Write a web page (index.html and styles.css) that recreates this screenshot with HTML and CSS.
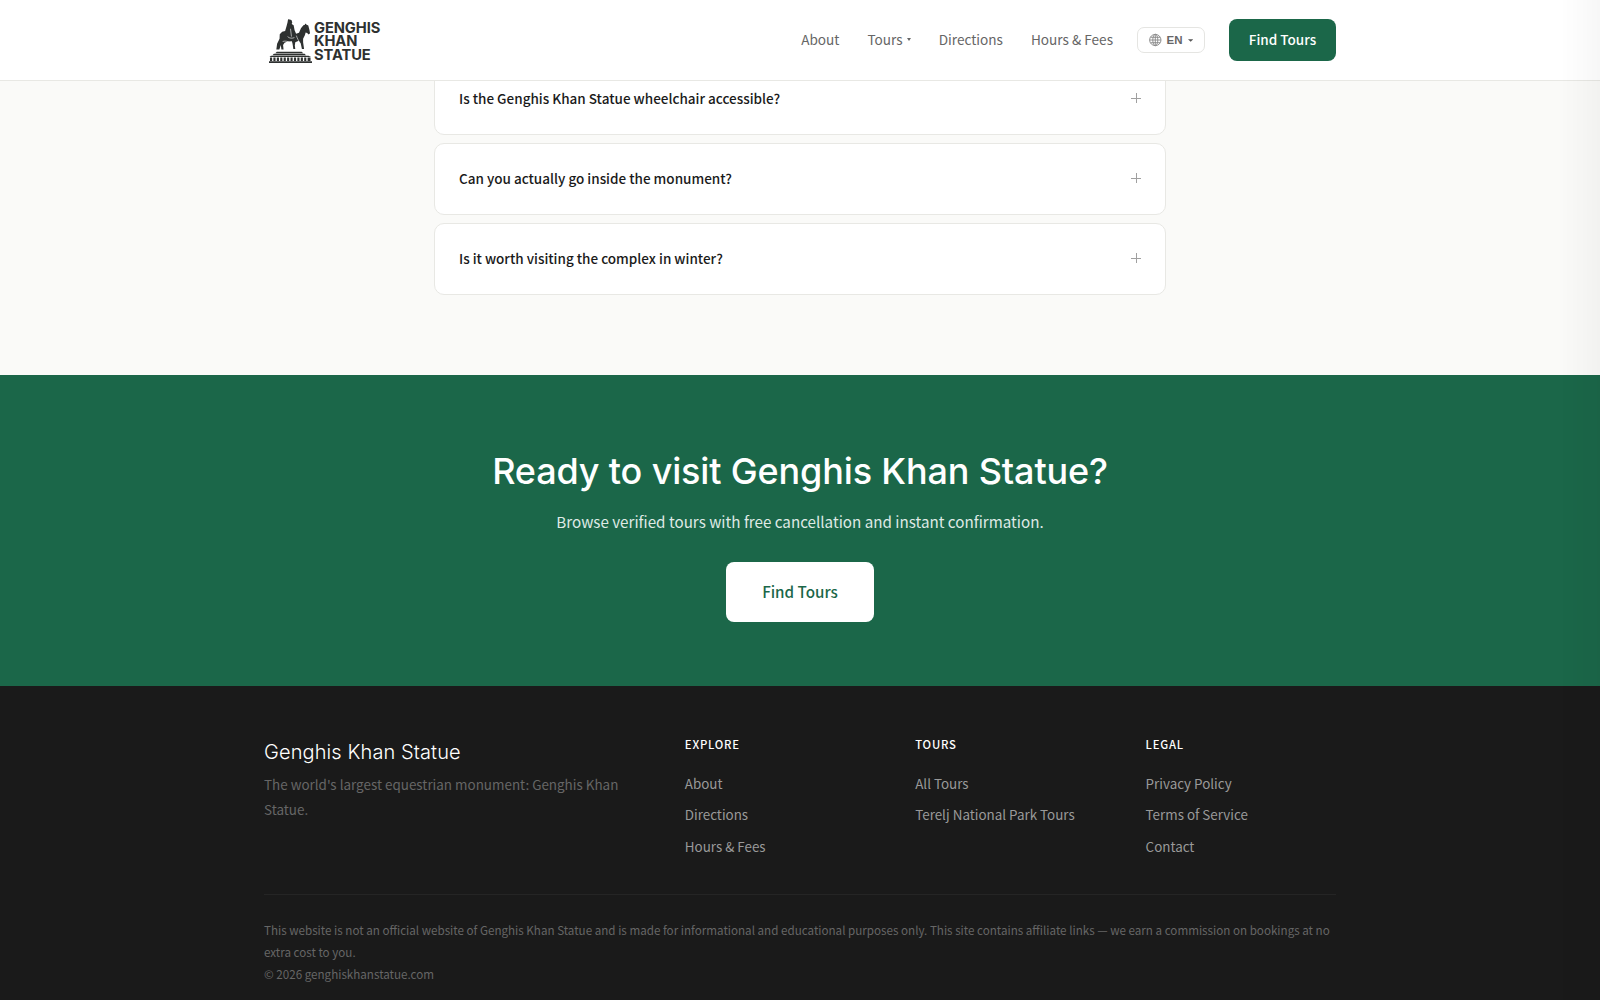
FILE: index.html
```html
<!DOCTYPE html>
<html lang="en">
<head>
<meta charset="utf-8">
<title>Genghis Khan Statue</title>
<link rel="stylesheet" href="styles.css">
</head>
<body>
<header class="site-header">
  <div class="container header-inner">
    <a class="logo" href="#">
      <svg class="logo-mark" width="43" height="45" viewBox="0 0 44 46" aria-hidden="true">
        <path fill="#2e3130" d="M21 1.500l2 .5.8 2.500-.6 1.500 2 1.500 1 5 1.500 3.500 3-1 2-4.500 2.500-3 1.500-.5.5-1.500 1 1.200 2 1 1.200 4.500.6 3.500-1.400 1.200-1.600-1.700-1.500-.5-.8 3-1.800 3.500v3.500l1 7h-2.200l-1.300-6-2-2.500-3.500 1.500-.5 3.500.5 3.500h-2l-.8-5.500-.7-2.500-4.500.3-3 1.200-1.500 2.500.5 4.500h-2.200l-.6-4.500-1.500 4.500H7.500l.8-6 2.500-5 .2-4.500 2.500-2.700 3-.8 1.500-5 1-4 .5-3z"/>
        <path fill="none" stroke="#fff" stroke-width=".6" d="M19 19c2 2 5 2 7 1M14 24c3-1 6 0 8 2M28 18c1 3 2 5 3 6M22 11l1 8"/>
        <path fill="#2e3130" d="M8 34.500h25.500l1.500 1.500H6.500zM5 36.500h31.500l1.300 1.500H3.500zM2 38.500h38.500l2.500 1.500H.5zM0 44.300h44V46H0z"/>
        <path fill="#2e3130" d="M1 40.500h2.200v3.500H1zM4.500 40.500h2.200v3.500H4.500zM8 40.500h2.200v3.500H8zM11.500 40.500h2.200v3.500h-2.200zM15 40.500h2.200v3.500H15zM18.500 40.500h2.200v3.500h-2.200zM22 40.500h2.200v3.500H22zM25.500 40.500h2.200v3.500h-2.200zM29 40.500h2.200v3.500H29zM32.500 40.500h2.200v3.500h-2.200zM36 40.500h2.200v3.500H36zM39.500 40.500h3v3.500h-3z"/>
      </svg>
      <span class="logo-text">GENGHIS<br>KHAN<br>STATUE</span>
    </a>
    <nav class="nav">
      <a href="#">About</a>
      <a href="#" class="nav-tours">Tours<svg class="mini-caret" width="4" height="3" viewBox="0 0 4 3" aria-hidden="true"><path fill="#666" d="M0 0h4L2 3z"/></svg></a>
      <a href="#">Directions</a>
      <a href="#">Hours &amp; Fees</a>
    </nav>
    <button class="lang">
      <svg class="globe" width="14" height="14" viewBox="0 0 14 14" fill="none" stroke="#888" stroke-width="1" aria-hidden="true">
        <circle cx="7" cy="7" r="6.300"/><ellipse cx="7" cy="7" rx="2.800" ry="6.300"/><path d="M.8 7h12.400M1.800 4h10.400M1.800 10h10.400M7 1v12"/>
      </svg>
      <span>EN</span>
      <svg class="lang-caret" width="6" height="3" viewBox="0 0 6 3" aria-hidden="true"><path fill="#555" d="M0 0h6L3 3z"/></svg>
    </button>
    <a class="btn-find" href="#">Find Tours</a>
  </div>
</header>
<main>
  <section class="faq">
    <div class="faq-list">
      <div class="faq-item"><span>Is the Genghis Khan Statue wheelchair accessible?</span><i class="plus"></i></div>
      <div class="faq-item"><span>Can you actually go inside the monument?</span><i class="plus"></i></div>
      <div class="faq-item"><span>Is it worth visiting the complex in winter?</span><i class="plus"></i></div>
    </div>
  </section>
  <section class="cta">
    <h2>Ready to visit Genghis Khan Statue?</h2>
    <p>Browse verified tours with free cancellation and instant confirmation.</p>
    <a class="cta-btn" href="#">Find Tours</a>
  </section>
</main>
<footer class="footer">
  <div class="container">
    <div class="footer-grid">
      <div>
        <div class="brand">Genghis Khan Statue</div>
        <p class="tagline">The world's largest equestrian monument: Genghis Khan Statue.</p>
      </div>
      <div class="col">
        <h4>EXPLORE</h4>
        <a href="#">About</a><a href="#">Directions</a><a href="#">Hours &amp; Fees</a>
      </div>
      <div class="col">
        <h4>TOURS</h4>
        <a href="#">All Tours</a><a href="#">Terelj National Park Tours</a>
      </div>
      <div class="col">
        <h4>LEGAL</h4>
        <a href="#">Privacy Policy</a><a href="#">Terms of Service</a><a href="#">Contact</a>
      </div>
    </div>
    <div class="legal">
      <p>This website is not an official website of Genghis Khan Statue and is made for informational and educational purposes only. This site contains affiliate links — we earn a commission on bookings at no extra cost to you.</p>
      <p>© 2026 genghiskhanstatue.com</p>
    </div>
  </div>
</footer>
<div class="edge-shade"></div>
</body>
</html>
```
FILE: styles.css
```css
* { box-sizing: border-box; }
html, body { margin: 0; padding: 0; height: 1000px; overflow: hidden; }
body {
  font-family: "Noto Sans CJK SC", "Noto Sans", sans-serif;
  background: #fafaf8;
  color: #1a1a1a;
}
a { text-decoration: none; color: inherit; }
.container { width: 1120px; margin: 0 auto; padding: 0 24px; }

.site-header {
  position: relative;
  z-index: 5;
  height: 81px;
  background: #fff;
  border-bottom: 1px solid #e8e8e4;
}
.header-inner { display: flex; align-items: center; height: 80px; }
.logo { display: flex; align-items: center; gap: 2px; margin-left: 5px; margin-right: auto; }
.logo-mark { display: block; }
.logo-text {
  padding-top: 4px;
  font-family: Inter, "Liberation Sans", sans-serif;
  font-weight: 700;
  font-size: 14.7px;
  line-height: 13.500px;
  letter-spacing: -0.1px;
  color: #2e3130;
}
.nav { display: flex; gap: 28px; margin-top: -2px; font-size: 13.600px; color: #666; }
.nav-tours { display: flex; align-items: center; gap: 4px; }
.lang {
  display: flex; align-items: center; gap: 5px;
  height: 26px; width: 68px;
  margin-left: 24px;
  padding: 0 11px;
  background: #fff;
  border: 1px solid #e5e5e2;
  border-radius: 7px;
  font-family: "Liberation Sans", sans-serif;
  font-size: 11.500px;
  font-weight: 700;
  color: #666;
}
.btn-find {
  display: flex; align-items: center; justify-content: center;
  width: 107px; height: 42px;
  margin-left: 24px;
  padding-bottom: 2px;
  background: #1b6749;
  border-radius: 8px;
  color: #fff;
  font-size: 13.500px;
  font-weight: 500;
}

.faq { height: 312px; }
.faq-list {
  display: flex; flex-direction: column; gap: 8px;
  width: 732px; margin: -18px auto 0;
}
.faq-item {
  display: flex; align-items: center; justify-content: space-between;
  height: 72px;
  padding: 0 24px 2px;
  background: #fff;
  border: 1px solid #e8e8e4;
  border-radius: 10px;
  font-size: 13.500px;
  font-weight: 500;
  color: #1a1a1a;
}
.plus { position: relative; display: block; width: 10px; height: 10px; }
.plus::before, .plus::after { content: ""; position: absolute; background: #a0a0a0; }
.plus::before { left: 0; right: 0; top: 4.500px; height: 1px; }
.plus::after { top: 0; bottom: 0; left: 4.500px; width: 1px; }

.cta {
  display: flex; flex-direction: column; align-items: center;
  height: 311px;
  padding-top: 72px;
  background: #1b6749;
  color: #fff;
}
.cta h2 {
  margin: 0;
  font-family: Inter, "Open Sans", sans-serif;
  font-size: 36px;
  line-height: 48px;
  font-weight: 500;
  letter-spacing: -0.15px;
}
.cta p { margin: 13px 0 0; font-size: 15.200px; line-height: 26px; color: #dfeae5; }
.cta-btn {
  display: flex; align-items: center; justify-content: center;
  width: 148px; height: 60px;
  margin-top: 27.500px;
  padding-bottom: 1px;
  background: #fff;
  border-radius: 8px;
  color: #1b6749;
  font-size: 15.200px;
  font-weight: 500;
}

.footer { height: 314px; background: #1a1a1a; padding-top: 48px; }
.footer-grid {
  display: grid;
  grid-template-columns: 2fr 1fr 1fr 1fr;
  gap: 40px;
  height: 160.500px;
  border-bottom: 1px solid #252525;
}
.brand { font-family: Inter, "Open Sans", sans-serif; font-size: 20px; line-height: 32px; font-weight: 300; letter-spacing: .1px; color: #fff; margin-top: 2px; }
.tagline { margin: 3.500px 0 0; font-size: 13.450px; line-height: 25.500px; color: #666; }
.col { display: flex; flex-direction: column; align-items: flex-start; }
.col h4 { margin: 0 0 18.500px; font-size: 11.300px; line-height: 20px; font-weight: 500; letter-spacing: .8px; color: #fff; }
.col a { font-size: 13.400px; line-height: 21.500px; margin-bottom: 10px; color: #999; }
.legal { padding-top: 24px; font-size: 11.640px; line-height: 22.400px; color: #666; }
.legal p { margin: 0; }

.edge-shade {
  position: fixed; top: 0; right: 0; bottom: 0; width: 40px;
  background: linear-gradient(to right, rgba(0,0,0,0), rgba(0,0,0,.03));
  z-index: 10;
  pointer-events: none;
}
```
